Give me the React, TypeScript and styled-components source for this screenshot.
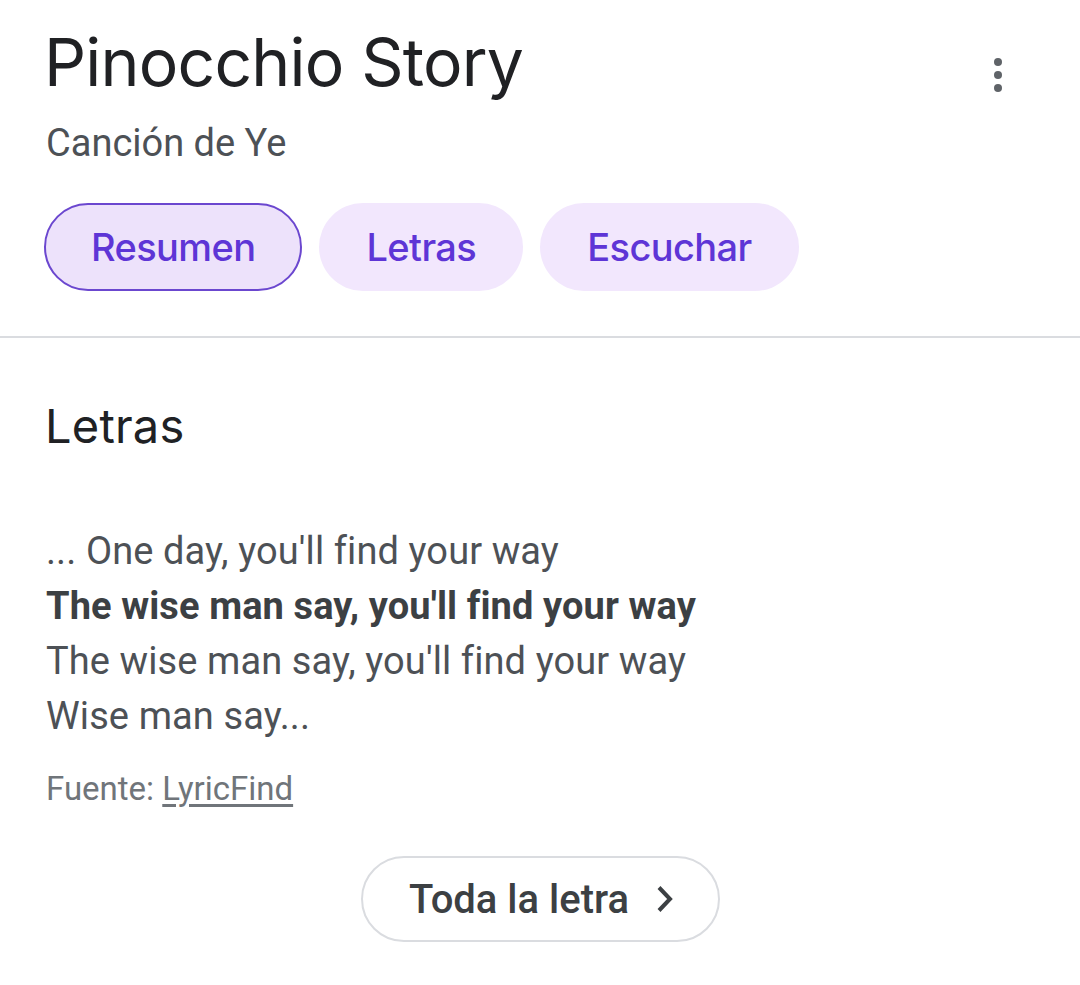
import React from "react";
import styled, { createGlobalStyle } from "styled-components";

const Global = createGlobalStyle`
  html, body { margin: 0; padding: 0; background: #fff; }
  body { font-family: Roboto, "Noto Sans", Arial, sans-serif; }
`;

const Page = styled.div`
  width: 1080px;
  background: #fff;
`;

const Header = styled.header`
  display: flex;
  justify-content: space-between;
  align-items: flex-start;
  padding: 22px 70px 0 46px;
`;

const TitleBlock = styled.div`
  display: flex;
  flex-direction: column;
`;

const Title = styled.h1`
  margin: 0;
  font-family: Inter, "Open Sans", sans-serif;
  font-weight: 400;
  font-size: 66px;
  line-height: 80px;
  color: #202124;
  letter-spacing: -0.8px;
  margin-left: -2px;
`;

const Subtitle = styled.div`
  margin-top: 18px;
  font-family: Roboto, sans-serif;
  font-size: 38px;
  line-height: 46px;
  color: #4d5156;
`;

const MoreButton = styled.button`
  margin-top: 31px;
  width: 24px;
  height: 44px;
  border: none;
  background: none;
  padding: 0;
  display: flex;
  align-items: center;
  justify-content: center;
`;

const Chips = styled.nav`
  display: flex;
  gap: 17px;
  padding: 37px 0 0 44px;
`;

const Chip = styled.button<{ $active?: boolean }>`
  height: 88px;
  padding: 0 ${(p) => (p.$active ? 45 : 47)}px;
  border-radius: 44px;
  border: ${(p) => (p.$active ? "2px solid #6b47cf" : "none")};
  background: ${(p) => (p.$active ? "#ede2fb" : "#f2e7fd")};
  color: #5e35d6;
  font-family: Inter, "Open Sans", sans-serif;
  font-weight: 500;
  font-size: 38px;
  letter-spacing: -0.6px;
  cursor: pointer;
`;

const Divider = styled.hr`
  margin: 45px 0 0;
  border: none;
  border-top: 2px solid #dadce0;
`;

const Section = styled.section`
  padding: 60px 46px 0;
  display: flex;
  flex-direction: column;
`;

const SectionTitle = styled.h2`
  margin: 0 0 0 -1px;
  font-family: Inter, "Open Sans", sans-serif;
  font-weight: 400;
  font-size: 47px;
  line-height: 56px;
  color: #202124;
  letter-spacing: 0.2px;
`;

const Lyrics = styled.div`
  margin-top: 70px;
  display: flex;
  flex-direction: column;
`;

const Line = styled.div<{ $bold?: boolean }>`
  font-family: Roboto, sans-serif;
  font-size: 38px;
  line-height: 55px;
  font-weight: ${(p) => (p.$bold ? 700 : 400)};
  color: ${(p) => (p.$bold ? "#3c4043" : "#4d5156")};
  letter-spacing: 0.1px;
`;

const Source = styled.div`
  margin-top: 25px;
  font-family: Roboto, sans-serif;
  font-size: 33px;
  line-height: 40px;
  color: #70757a;
  a {
    color: #70757a;
    text-decoration: underline;
    text-underline-offset: 4px;
  }
`;

const Footer = styled.div`
  display: flex;
  justify-content: center;
  padding-top: 47px;
`;

const MoreLink = styled.button`
  height: 86px;
  width: 359px;
  border: 2px solid #dadce0;
  border-radius: 43px;
  background: #fff;
  display: flex;
  align-items: center;
  justify-content: center;
  gap: 26px;
  font-family: Roboto, sans-serif;
  font-weight: 500;
  font-size: 40px;
  color: #3c4043;
  padding: 0 0 0 4px;
`;

export default function App() {
  return (
    <Page>
      <Global />
      <Header>
        <TitleBlock>
          <Title>Pinocchio Story</Title>
          <Subtitle>Canción de Ye</Subtitle>
        </TitleBlock>
        <MoreButton aria-label="Más opciones">
          <svg width="10" height="36" viewBox="0 0 10 36">
            <circle cx="5" cy="5" r="4" fill="#5f6368" />
            <circle cx="5" cy="18" r="4" fill="#5f6368" />
            <circle cx="5" cy="31" r="4" fill="#5f6368" />
          </svg>
        </MoreButton>
      </Header>
      <Chips>
        <Chip $active>Resumen</Chip>
        <Chip>Letras</Chip>
        <Chip>Escuchar</Chip>
      </Chips>
      <Divider />
      <Section>
        <SectionTitle>Letras</SectionTitle>
        <Lyrics>
          <Line>... One day, you'll find your way</Line>
          <Line $bold>The wise man say, you'll find your way</Line>
          <Line>The wise man say, you'll find your way</Line>
          <Line>Wise man say...</Line>
        </Lyrics>
        <Source>
          Fuente: <a href="#">LyricFind</a>
        </Source>
      </Section>
      <Footer>
        <MoreLink>
          Toda la letra
          <svg width="20" height="32" viewBox="0 0 20 32">
            <path d="M4 4.5 L15 16 L4 27.5" fill="none" stroke="#3c4043" strokeWidth="4" />
          </svg>
        </MoreLink>
      </Footer>
    </Page>
  );
}
